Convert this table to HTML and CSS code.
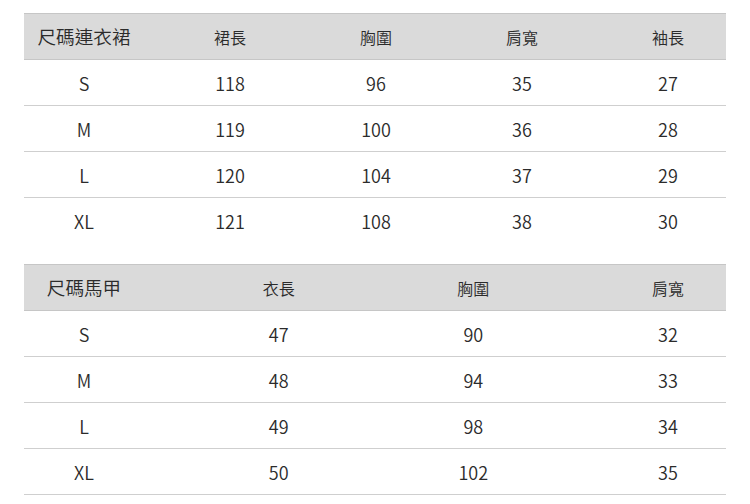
FILE: index.html
```html
<!DOCTYPE html>
<html lang="zh-Hant">
<head>
<meta charset="utf-8">
<link rel="stylesheet" href="styles.css">
</head>
<body>
<div class="page">
  <div class="table">
    <div class="row head five">
      <div class="cell first">尺碼連衣裙</div>
      <div class="cell">裙長</div>
      <div class="cell">胸圍</div>
      <div class="cell">肩寬</div>
      <div class="cell">袖長</div>
    </div>
    <div class="row five"><div class="cell">S</div><div class="cell">118</div><div class="cell">96</div><div class="cell">35</div><div class="cell">27</div></div>
    <div class="row five"><div class="cell">M</div><div class="cell">119</div><div class="cell">100</div><div class="cell">36</div><div class="cell">28</div></div>
    <div class="row five"><div class="cell">L</div><div class="cell">120</div><div class="cell">104</div><div class="cell">37</div><div class="cell">29</div></div>
    <div class="row five last"><div class="cell">XL</div><div class="cell">121</div><div class="cell">108</div><div class="cell">38</div><div class="cell">30</div></div>
  </div>
  <div class="table second">
    <div class="row head">
      <div class="cell first">尺碼馬甲</div>
      <div class="cell">衣長</div>
      <div class="cell">胸圍</div>
      <div class="cell">肩寬</div>
    </div>
    <div class="row"><div class="cell">S</div><div class="cell">47</div><div class="cell">90</div><div class="cell">32</div></div>
    <div class="row"><div class="cell">M</div><div class="cell">48</div><div class="cell">94</div><div class="cell">33</div></div>
    <div class="row"><div class="cell">L</div><div class="cell">49</div><div class="cell">98</div><div class="cell">34</div></div>
    <div class="row"><div class="cell">XL</div><div class="cell">50</div><div class="cell">102</div><div class="cell">35</div></div>
  </div>
</div>
</body>
</html>
```

FILE: styles.css
```css
html, body {
  margin: 0;
  padding: 0;
  background: #ffffff;
}
.page {
  padding: 13px 24px 0 24px;
  width: 702px;
  font-family: "Noto Sans CJK TC", "Noto Sans", sans-serif;
  font-weight: 350;
  color: #2b2b2b;
}
.table {
  display: flex;
  flex-direction: column;
}
.table.second {
  margin-top: 20px;
}
.row {
  display: flex;
  justify-content: space-between;
  align-items: center;
  height: 46px;
  box-sizing: border-box;
  padding-left: 2px;
  border-bottom: 1px solid #cfcfcf;
  font-size: 18px;
}
.row.last {
  border-bottom: none;
}
.row.head {
  height: 47px;
  background: #dadada;
  border-top: 1px solid #c6c6c6;
  border-bottom: 1px solid #c6c6c6;
  font-size: 16px;
}
.cell {
  width: 116px;
  text-align: center;
  line-height: 1;
  white-space: nowrap;
}
.cell.first {
  font-size: 18.6px;
}
```
